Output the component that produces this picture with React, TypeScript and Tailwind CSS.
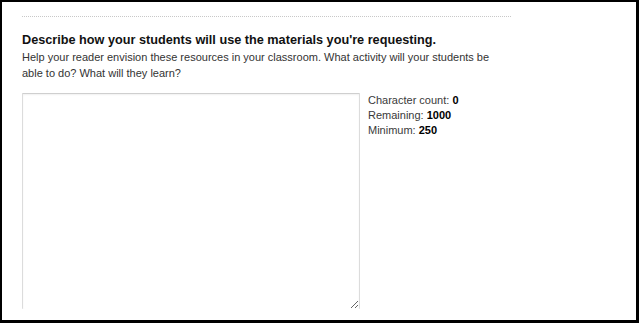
export default function App() {
  return (
    <div className="w-[640px] h-[324px] bg-white">
      <div
        className="w-[639px] h-[323px] border-2 border-r-[3px] border-b-[3px] border-black bg-white overflow-hidden"
        style={{ fontFamily: '"Liberation Sans", Arial, sans-serif' }}
      >
        <div className="pl-[20px] pt-[14px]">
          {/* divider */}
          <div className="w-[489px] border-t border-dotted border-[#c8c8c8]" />

          {/* heading */}
          <h2 className="mt-[15px] text-[12.7px] leading-[16px] font-bold text-[#111]">
            Describe how your students will use the materials you're requesting.
          </h2>
          <p className="mt-[1px] w-[480px] text-[11px] leading-[16px] text-[#333]">
            Help your reader envision these resources in your classroom. What activity will your students be
            able to do? What will they learn?
          </p>

          {/* textarea + counts */}
          <div className="mt-[12px] flex items-start gap-[8px]">
            <textarea className="w-[338px] h-[216px] border border-b-0 border-[#dcdcdc] border-t-[#cfcfcf] shadow-[inset_0_1px_2px_rgba(0,0,0,0.06)] rounded-[1px] outline-none" />
            <div className="text-[11px] leading-[15px] text-[#3a3a3a]">
              <div>
                Character count: <b className="text-black">0</b>
              </div>
              <div>
                Remaining: <b className="text-black">1000</b>
              </div>
              <div>
                Minimum: <b className="text-black">250</b>
              </div>
            </div>
          </div>
        </div>
      </div>
    </div>
  );
}
